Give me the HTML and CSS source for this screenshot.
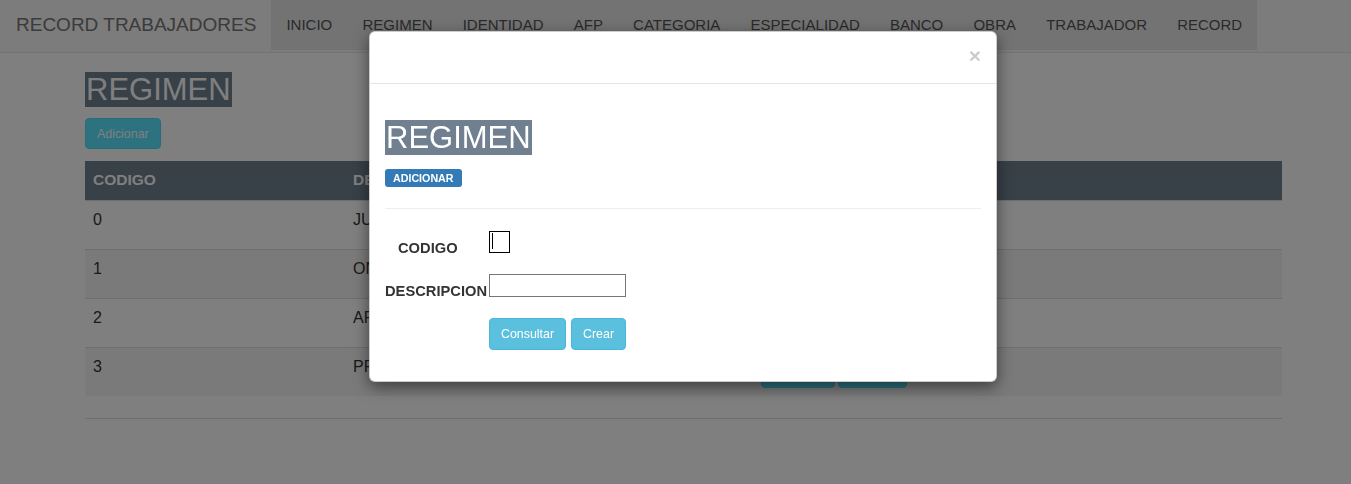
FILE: index.html
```html
<!DOCTYPE html>
<html lang="es">
<head>
    <meta charset="UTF-8">
    <meta name="viewport" content="width=device-width, initial-scale=1.0">
    <title>Record Trabajadores - Regimen</title>
    <link rel="stylesheet" href="styles.css">
</head>
<body>
    <nav class="navbar">
        <a class="brand" href="#">RECORD TRABAJADORES</a>
        <ul class="nav-links">
            <li><a href="#">INICIO</a></li>
            <li><a href="#">REGIMEN</a></li>
            <li><a href="#">IDENTIDAD</a></li>
            <li><a href="#">AFP</a></li>
            <li><a href="#">CATEGORIA</a></li>
            <li><a href="#">ESPECIALIDAD</a></li>
            <li><a href="#">BANCO</a></li>
            <li><a href="#">OBRA</a></li>
            <li><a href="#">TRABAJADOR</a></li>
            <li><a href="#">RECORD</a></li>
        </ul>
    </nav>

    <main class="page">
        <h2 class="title"><span>REGIMEN</span></h2>
        <button class="btn btn-info btn-add">Adicionar</button>

        <table class="grid">
            <thead>
                <tr>
                    <th class="col-code">CODIGO</th>
                    <th class="col-desc">DESCRIPCION</th>
                    <th>OPCIONES</th>
                </tr>
            </thead>
            <tbody>
                <tr>
                    <td>0</td>
                    <td>JUBILACION</td>
                    <td><button class="btn btn-info">Modificar</button><button class="btn btn-info">Eliminar</button></td>
                </tr>
                <tr>
                    <td>1</td>
                    <td>ONP</td>
                    <td><button class="btn btn-info">Modificar</button><button class="btn btn-info">Eliminar</button></td>
                </tr>
                <tr>
                    <td>2</td>
                    <td>AFP</td>
                    <td><button class="btn btn-info">Modificar</button><button class="btn btn-info">Eliminar</button></td>
                </tr>
                <tr>
                    <td>3</td>
                    <td>PRIMA</td>
                    <td><button class="btn btn-info">Modificar</button><button class="btn btn-info">Eliminar</button></td>
                </tr>
            </tbody>
        </table>
        <hr class="rule">
    </main>

    <div class="backdrop"></div>

    <div class="modal">
        <div class="modal-header">
            <button class="close">&times;</button>
        </div>
        <div class="modal-body">
            <h2 class="title modal-title"><span>REGIMEN</span></h2>
            <span class="badge">ADICIONAR</span>
            <hr class="divider">
            <form class="regimen-form">
                <div class="form-row">
                    <label class="code-label">CODIGO</label>
                    <input class="code-input" type="text">
                </div>
                <div class="form-row form-row-desc">
                    <label>DESCRIPCION</label>
                    <input class="desc-input" type="text">
                </div>
                <div class="actions">
                    <button type="button" class="btn btn-light-info">Consultar</button>
                    <button type="button" class="btn btn-light-info">Crear</button>
                </div>
            </form>
        </div>
    </div>
</body>
</html>
```

FILE: styles.css
```css
body {
    margin: 0;
    font-family: "Liberation Sans", Arial, sans-serif;
    color: #333;
    background: #fff;
}

/* top bar */
.navbar {
    display: flex;
    height: 52px;
    background: #f8f8f8;
    border-bottom: 1px solid #e7e7e7;
}

.brand {
    padding: 15px 15px 15px 16px;
    height: 20px;
    font-size: 19px;
    line-height: 20px;
    color: #777;
    text-decoration: none;
}

.nav-links {
    display: flex;
    margin: 0;
    padding: 0;
    height: 50px;
    list-style: none;
    background: #e7e7e7;
}

.nav-links a {
    display: block;
    padding: 15px 15.1px;
    font-size: 15px;
    line-height: 20px;
    color: #555;
    text-decoration: none;
}

/* page content */
.page {
    width: 1197px;
    margin-left: 85px;
}

.title {
    margin: 19px 0 11px;
    font-size: 31px;
    font-weight: normal;
    line-height: 35px;
}

.title span {
    display: inline-block;
    padding: 0 1px;
    background: #708090;
    color: #fff;
}

.btn {
    display: inline-block;
    height: 32px;
    padding: 0 11px;
    font-family: inherit;
    font-size: 12.4px;
    color: #fff;
    border: 1px solid transparent;
    border-radius: 4px;
    cursor: pointer;
}

.btn-info {
    background: #58e4ff;
    border-color: #50d8f4;
}

.btn-add {
    height: 31px;
    margin-bottom: 12px;
}

.grid {
    width: 100%;
    border-collapse: collapse;
}

.grid th {
    padding: 8px 8px 9px;
    background: #708090;
    color: #fff;
    font-size: 15.5px;
    line-height: 22px;
    text-align: left;
}

.grid .col-code {
    width: 244px;
}

.grid .col-desc {
    width: 392px;
}

.grid td {
    padding: 8px;
    border-top: 1px solid #ddd;
    font-size: 16px;
    line-height: 22px;
    vertical-align: top;
}

.grid tbody tr:nth-child(even) {
    background: #f5f5f5;
}

.grid td .btn {
    margin-right: 3px;
}

.rule {
    margin: 22px 0 0;
    border: 0;
    border-top: 1px solid #ddd;
}

/* modal */
.backdrop {
    position: fixed;
    inset: 0;
    background: rgba(0, 0, 0, 0.5);
}

.modal {
    position: absolute;
    top: 31px;
    left: 369px;
    width: 628px;
    box-sizing: border-box;
    background: #fff;
    border: 1px solid rgba(0, 0, 0, 0.2);
    border-radius: 6px;
    box-shadow: 0 5px 15px rgba(0, 0, 0, 0.5);
}

.modal-header {
    height: 21px;
    padding: 15px;
    border-bottom: 1px solid #e5e5e5;
}

.close {
    float: right;
    margin-top: -2px;
    padding: 0;
    background: none;
    border: 0;
    font-family: inherit;
    font-size: 21px;
    font-weight: bold;
    line-height: 1;
    color: #000;
    opacity: 0.2;
    text-shadow: 0 1px 0 #fff;
}

.modal-body {
    padding: 15px 15px 31px;
}

.modal-title {
    margin: 21px 0 14px;
}

.badge {
    display: inline-block;
    height: 18px;
    padding: 0 8px;
    background: #337ab7;
    color: #fff;
    border-radius: 3px;
    font-size: 10.7px;
    font-weight: bold;
    line-height: 18px;
    vertical-align: top;
}

.divider {
    margin: 21px 0 22px;
    border: 0;
    border-top: 1px solid #eee;
}

.form-row {
    display: flex;
    align-items: flex-start;
    margin-bottom: 17px;
}

.form-row-desc {
    margin-bottom: 18px;
}

.form-row label {
    width: 104px;
    box-sizing: border-box;
    padding-top: 8px;
    font-size: 14.7px;
    font-weight: bold;
    line-height: 18px;
}

.form-row .code-label {
    padding-left: 13px;
}

.code-input {
    width: 21px;
    height: 22px;
    box-sizing: border-box;
    margin: 0;
    padding: 0;
    border: 1px solid #000;
    background: linear-gradient(#000, #000) no-repeat 2px 1px / 1px 16px, #fff;
}

.desc-input {
    width: 137px;
    height: 23px;
    box-sizing: border-box;
    margin: 0;
    padding: 1px 2px;
    border: 1px solid #767676;
}

.actions {
    display: flex;
    gap: 5px;
    margin-left: 104px;
}

.btn-light-info {
    background: #5bc0de;
    border-color: #46b8da;
}
```
